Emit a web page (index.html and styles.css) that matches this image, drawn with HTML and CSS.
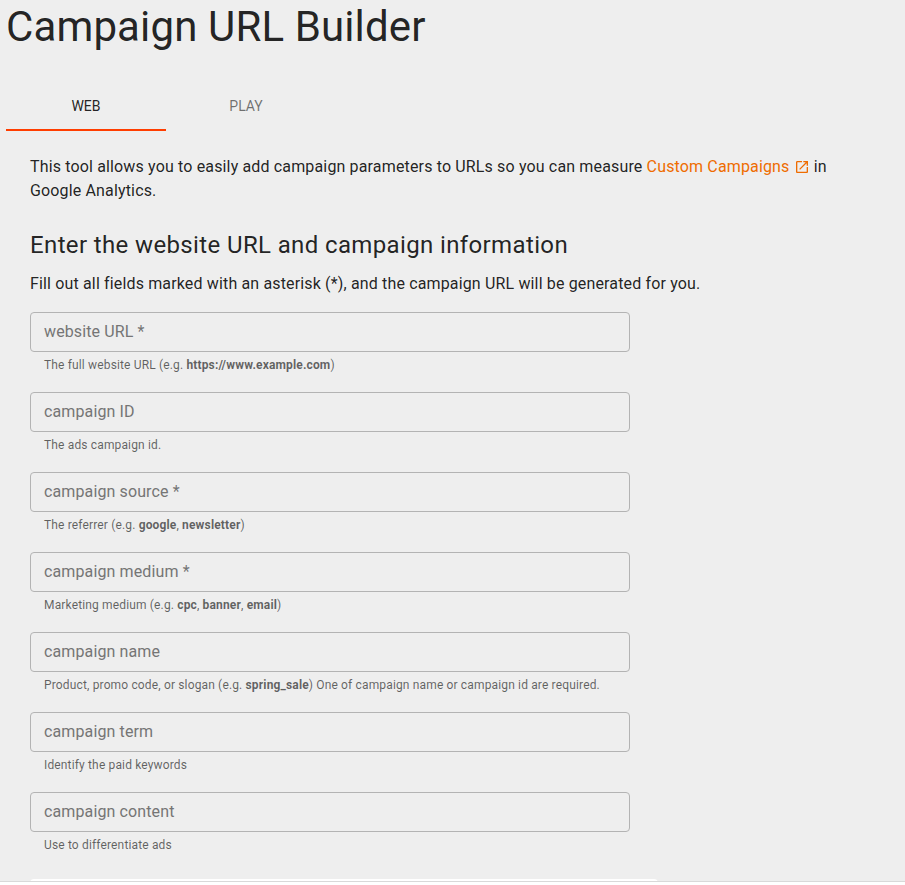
FILE: index.html
```html
<!DOCTYPE html>
<html lang="en">
<head>
  <meta charset="UTF-8">
  <meta name="viewport" content="width=device-width, initial-scale=1.0">
  <title>Campaign URL Builder</title>
  <link rel="stylesheet" href="styles.css">
</head>
<body>
  <div class="page">
    <h1>Campaign URL Builder</h1>

    <!-- Tabs -->
    <div class="tabs">
      <button class="tab active">WEB</button>
      <button class="tab">PLAY</button>
    </div>

    <div class="content">
      <p class="intro">This tool allows you to easily add campaign parameters to URLs so you can measure <a href="#">Custom Campaigns <svg class="external" viewBox="0 0 24 24"><path d="M19 19H5V5h7V3H5c-1.11 0-2 .9-2 2v14c0 1.1.89 2 2 2h14c1.1 0 2-.9 2-2v-7h-2v7zM14 3v2h3.59l-9.83 9.83 1.41 1.41L19 6.41V10h2V3h-7z"/></svg></a> in<br>Google Analytics.</p>

      <h2>Enter the website URL and campaign information</h2>
      <p class="hint">Fill out all fields marked with an asterisk (*), and the campaign URL will be generated for you.</p>

      <!-- Campaign form -->
      <form class="fields">
        <div class="field">
          <input type="text" placeholder="website URL *">
          <p>The full website URL (e.g. <b>https://www.example.com</b>)</p>
        </div>
        <div class="field">
          <input type="text" placeholder="campaign ID">
          <p>The ads campaign id.</p>
        </div>
        <div class="field">
          <input type="text" placeholder="campaign source *">
          <p>The referrer (e.g. <b>google</b>, <b>newsletter</b>)</p>
        </div>
        <div class="field">
          <input type="text" placeholder="campaign medium *">
          <p>Marketing medium (e.g. <b>cpc</b>, <b>banner</b>, <b>email</b>)</p>
        </div>
        <div class="field">
          <input type="text" placeholder="campaign name">
          <p>Product, promo code, or slogan (e.g. <b>spring_sale</b>) One of campaign name or campaign id are required.</p>
        </div>
        <div class="field">
          <input type="text" placeholder="campaign term">
          <p>Identify the paid keywords</p>
        </div>
        <div class="field">
          <input type="text" placeholder="campaign content">
          <p>Use to differentiate ads</p>
        </div>
      </form>

      <!-- Generated URL -->
      <div class="result"></div>
    </div>
  </div>
</body>
</html>
```

FILE: styles.css
```css
* {
  box-sizing: border-box;
}
body {
  margin: 0;
  background-color: #fff;
  color: rgba(0, 0, 0, 0.87);
  font-family: Roboto, sans-serif;
  font-size: 16px;
  line-height: 24px;
  letter-spacing: 0.15px;
}
.page {
  height: 882px;
  overflow: hidden;
  background-color: #eee;
  border-bottom: 1px solid #d9d9d9;
}
h1, h2, p {
  margin: 0;
  font-weight: 400;
}
h1 {
  padding: 2px 6px 0;
  font-size: 42px;
  line-height: 50px;
  letter-spacing: 0.13px;
}
.tabs {
  display: flex;
  margin: 30px 0 0 6px;
}
.tab {
  width: 160px;
  height: 49px;
  padding: 0;
  border: none;
  border-bottom: 2px solid transparent;
  background: none;
  color: rgba(0, 0, 0, 0.54);
  font-family: inherit;
  font-size: 14px;
  letter-spacing: 0;
}
.tab.active {
  border-color: #ff3d00;
  color: rgba(0, 0, 0, 0.87);
}
.content {
  padding: 24px 30px 0;
}
.intro a {
  color: #ef6c00;
  text-decoration: none;
}
.external {
  width: 16px;
  height: 16px;
  vertical-align: -3px;
  fill: currentColor;
}
h2 {
  margin-top: 26px;
  font-size: 24px;
  line-height: 32px;
  letter-spacing: 0.37px;
}
.hint {
  margin-top: 11px;
}
.fields {
  margin-top: 16px;
}
.field {
  width: 600px;
  height: 80px;
}
.field input {
  display: block;
  width: 100%;
  height: 40px;
  padding: 0 13px 2px;
  border: 1px solid #b3b3b3;
  border-radius: 4px;
  background: none;
  font: inherit;
  letter-spacing: 0.12px;
}
.field input::placeholder {
  color: #757575;
}
.field p {
  padding: 3px 0 0 14px;
  color: rgba(0, 0, 0, 0.6);
  font-size: 12px;
  line-height: 20px;
  letter-spacing: 0.15px;
}
.result {
  width: 628px;
  height: 60px;
  margin-top: 7px;
  border-radius: 4px;
  background: #fff;
}
```
